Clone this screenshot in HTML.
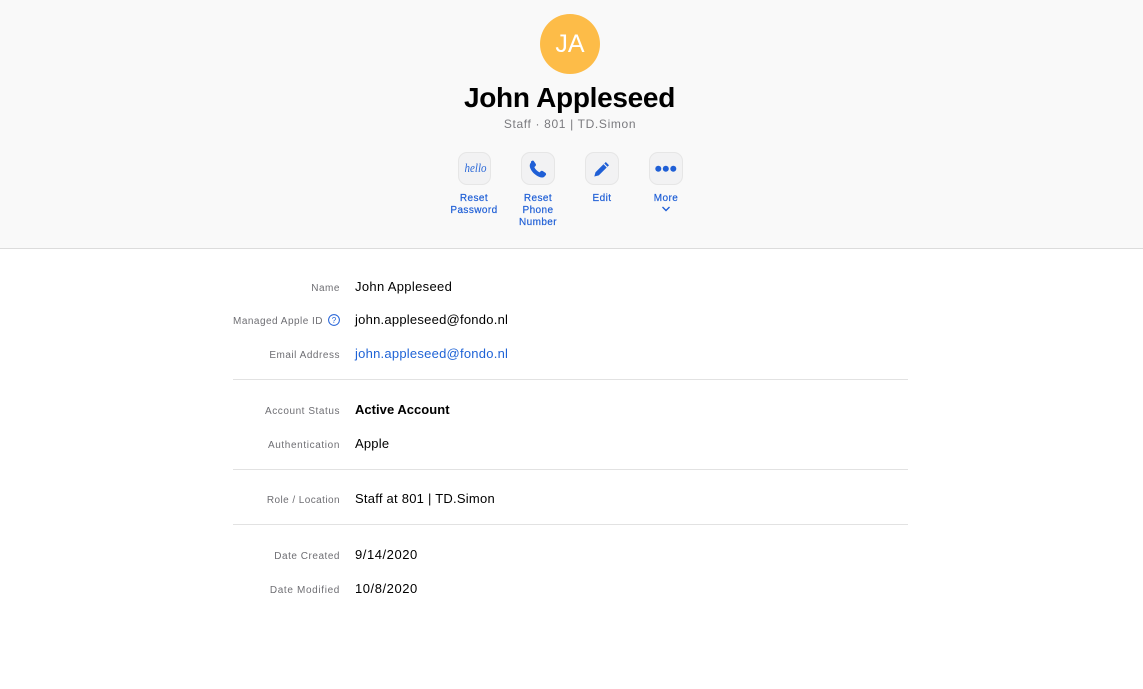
<!DOCTYPE html>
<html>
<head>
<meta charset="utf-8">
<style>
html,body{margin:0;padding:0;width:1143px;height:689px;overflow:hidden;background:#fff;font-family:"Liberation Sans",sans-serif;}
.t{position:absolute;white-space:nowrap;}
.hdr{position:absolute;left:0;top:0;width:1143px;height:248px;background:#f9f9f9;border-bottom:1px solid #dcdcdc;}
.av{position:absolute;left:540px;top:14px;width:60px;height:60px;border-radius:50%;background:#fdbc48;color:#fff;font-size:25px;line-height:60px;text-align:center;}
.btn{position:absolute;top:152px;width:32px;height:31px;border:1px solid #e6e6e6;border-radius:9px;background:#f2f2f3;}
.btn svg{position:absolute;left:0;top:0;}
.c{position:absolute;width:80px;text-align:center;color:#1f5fd6;font-size:10px;line-height:12px;letter-spacing:.42px;-webkit-text-stroke:.2px #1f5fd6;}
.l{position:absolute;right:803px;white-space:nowrap;color:#6e6e73;font-size:10px;line-height:14px;letter-spacing:.52px;}
.v{position:absolute;left:355px;white-space:nowrap;color:#000;font-size:13px;line-height:16px;letter-spacing:.33px;}
.hr{position:absolute;left:233px;width:675px;height:1px;background:#e2e2e2;}
</style>
</head>
<body>
<div class="hdr"></div>
<div class="av">JA</div>
<div class="t" style="left:0;width:1139px;text-align:center;top:81px;font-size:28px;line-height:34px;font-weight:700;color:#000;letter-spacing:-.3px;">John Appleseed</div>
<div class="t" style="left:0;width:1140px;text-align:center;top:117px;font-size:12px;line-height:15px;letter-spacing:.65px;color:#7a7a7e;">Staff · 801 | TD.Simon</div>

<div class="btn" style="left:458px;width:31px;"><svg width="32" height="32" viewBox="0 0 32 32"><text x="5.500" y="19" textLength="22" lengthAdjust="spacingAndGlyphs" font-family="Liberation Serif,serif" font-style="italic" font-size="12.500" fill="#2a68d8">hello</text></svg></div>
<div class="btn" style="left:521px;"><svg width="32" height="32" viewBox="0 0 32 32"><path transform="translate(-2 -2.300) scale(1.130)" d="M9.800 9.500c.9-.9 2-1 2.600-.1l1.500 2.300c.4.700.3 1.300-.2 1.800l-1 1c.8 1.900 2.500 3.700 4.600 4.700l1-1c.5-.5 1.200-.6 1.800-.2l2.300 1.500c.9.600.9 1.700.1 2.500l-1 1c-1 .9-2.600 1-4.200.3-4.200-1.800-7.400-5-8.500-8.700-.4-1.600-.1-3 .9-4z" fill="#1f5fd6"/></svg></div>
<div class="btn" style="left:585px;"><svg width="32" height="32" viewBox="0 0 32 32"><path transform="translate(-1 0)" d="M20.800 9l3.200 3.200-1.500 1.500-3.200-3.200zM18.500 11.300l3.200 3.200-7.900 7.900-4.500 1.100 1.200-4.300z" fill="#1f5fd6"/></svg></div>
<div class="btn" style="left:649px;"><svg width="32" height="32" viewBox="0 0 32 32"><circle cx="8.300" cy="15.700" r="3" fill="#1f5fd6"/><circle cx="15.800" cy="15.700" r="3" fill="#1f5fd6"/><circle cx="23.300" cy="15.700" r="3" fill="#1f5fd6"/></svg></div>

<div class="c" style="left:434px;top:193px;">Reset<br>Password</div>
<div class="c" style="left:498px;top:193px;">Reset<br>Phone<br>Number</div>
<div class="c" style="left:562px;top:193px;">Edit</div>
<div class="c" style="left:626px;top:193px;">More</div>
<svg style="position:absolute;left:661px;top:205px;" width="10" height="8" viewBox="0 0 10 8"><path d="M1.500 2l3.500 3.500L8.500 2" fill="none" stroke="#1f5fd6" stroke-width="1.400"/></svg>

<div class="l" style="top:282px;">Name</div>
<div class="v" style="top:279px;">John Appleseed</div>
<div class="l" style="top:315px;right:820px;letter-spacing:.48px;">Managed Apple ID</div>
<svg style="position:absolute;left:328px;top:314px;" width="12" height="12" viewBox="0 0 12 12"><circle cx="6" cy="6" r="5.400" fill="none" stroke="#1f5fd6" stroke-width="1"/><text x="6" y="9" text-anchor="middle" font-family="Liberation Sans,sans-serif" font-size="8" fill="#1f5fd6">?</text></svg>
<div class="v" style="top:312px;letter-spacing:.24px;">john.appleseed@fondo.nl</div>
<div class="l" style="top:349px;">Email Address</div>
<div class="v" style="top:346px;color:#1f63d6;letter-spacing:.24px;">john.appleseed@fondo.nl</div>
<div class="hr" style="top:379px;"></div>

<div class="l" style="top:405px;letter-spacing:.55px;">Account Status</div>
<div class="v" style="top:402px;font-weight:700;letter-spacing:.03px;">Active Account</div>
<div class="l" style="top:439px;letter-spacing:.62px;">Authentication</div>
<div class="v" style="top:436px;letter-spacing:.2px;">Apple</div>
<div class="hr" style="top:469px;"></div>

<div class="l" style="top:494px;letter-spacing:.43px;">Role / Location</div>
<div class="v" style="top:491px;letter-spacing:.24px;">Staff at 801 | TD.Simon</div>
<div class="hr" style="top:524px;"></div>

<div class="l" style="top:550px;">Date Created</div>
<div class="v" style="top:547px;letter-spacing:.55px;">9/14/2020</div>
<div class="l" style="top:584px;letter-spacing:.65px;">Date Modified</div>
<div class="v" style="top:581px;letter-spacing:.55px;">10/8/2020</div>
</body>
</html>
